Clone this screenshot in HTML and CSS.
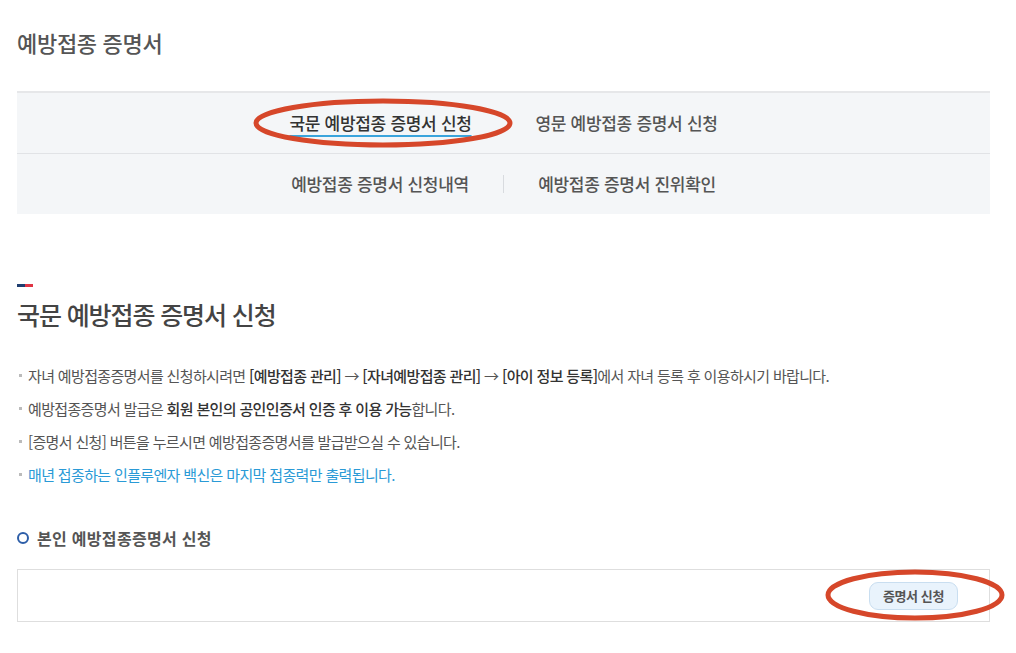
FILE: index.html
```html
<!DOCTYPE html>
<html lang="ko">
<head>
    <meta charset="UTF-8">
    <meta name="viewport" content="width=device-width, initial-scale=1.0">
    <title>예방접종 증명서</title>
    <link rel="stylesheet" href="styles.css">
</head>
<body>
    <div class="page">
        <h1 class="page-title">예방접종 증명서</h1>

        <div class="tabs">
            <div class="tab-row">
                <a class="tab active" href="#">국문 예방접종 증명서 신청</a>
                <a class="tab" href="#">영문 예방접종 증명서 신청</a>
            </div>
            <div class="tab-row">
                <a class="tab" href="#">예방접종 증명서 신청내역</a>
                <span class="tab-sep"></span>
                <a class="tab" href="#">예방접종 증명서 진위확인</a>
            </div>
            <svg class="mark mark-tab" width="262" height="52" viewBox="0 0 262 52">
                <ellipse cx="131" cy="26" rx="127" ry="22" fill="none" stroke="#d6472a" stroke-width="5"/>
            </svg>
        </div>

        <div class="section-bar"><span class="navy"></span><span class="red"></span></div>
        <h2 class="section-title">국문 예방접종 증명서 신청</h2>

        <ul class="notes">
            <li>자녀 예방접종증명서를 신청하시려면 <b>[예방접종 관리]</b> → <b>[자녀예방접종 관리]</b> → <b>[아이 정보 등록]</b>에서 자녀 등록 후 이용하시기 바랍니다.</li>
            <li>예방접종증명서 발급은 <b>회원 본인의 공인인증서 인증 후 이용 가능</b>합니다.</li>
            <li>[증명서 신청] 버튼을 누르시면 예방접종증명서를 발급받으실 수 있습니다.</li>
            <li class="blue">매년 접종하는 인플루엔자 백신은 마지막 접종력만 출력됩니다.</li>
        </ul>

        <h3 class="sub-title"><span class="ring"></span>본인 예방접종증명서 신청</h3>
        <div class="apply-box">
            <button class="btn-apply">증명서 신청</button>
            <svg class="mark mark-btn" width="182" height="54" viewBox="0 0 182 54">
                <ellipse cx="91" cy="27" rx="87" ry="23" fill="none" stroke="#d6472a" stroke-width="5"/>
            </svg>
        </div>
    </div>
</body>
</html>
```

FILE: styles.css
```css
body {
    margin: 0;
    background-color: #fff;
    font-family: "Noto Sans CJK KR", "Noto Sans", sans-serif;
    color: #555;
}

.page {
    width: 973px;
    padding: 26px 0 0 17px;
}

.page-title {
    margin: 0 0 33px;
    font-size: 22px;
    font-weight: 500;
    letter-spacing: -0.3px;
    line-height: 32px;
    color: #555;
}

.tabs {
    position: relative;
    background-color: #f4f6f8;
    border-top: 2px solid #e6e7e9;
}

.tab-row {
    display: flex;
    justify-content: center;
    align-items: center;
    height: 60px;
}

.tab-row + .tab-row {
    border-top: 1px solid #e1e3e6;
}

.tab {
    width: 186px;
    margin: 0 30px 2px;
    text-align: center;
    font-size: 17px;
    font-weight: 500;
    letter-spacing: -0.3px;
    white-space: nowrap;
    color: #555;
    text-decoration: none;
}

.tab.active {
    color: #333;
    text-decoration: underline;
    text-decoration-color: #3aa4dc;
    text-decoration-thickness: 2px;
    text-underline-offset: 5px;
}

.tab-sep {
    width: 1px;
    height: 18px;
    background-color: #d8dbdf;
}

.mark {
    position: absolute;
}

.mark-tab {
    left: 235px;
    top: 4px;
}

.section-bar {
    display: flex;
    margin-top: 70px;
}

.section-bar span {
    width: 8px;
    height: 3px;
}

.navy {
    background-color: #1f3e70;
}

.red {
    background-color: #e03444;
}

.section-title {
    margin: 9px 0 0;
    font-size: 25px;
    font-weight: 500;
    letter-spacing: -1.1px;
    line-height: 36px;
    color: #444;
}

.notes {
    list-style: none;
    margin: 27px 0 0;
    padding: 0;
}

.notes li {
    position: relative;
    padding-left: 11px;
    font-size: 15px;
    letter-spacing: -0.65px;
    line-height: 33px;
    white-space: nowrap;
    color: #555;
}

.notes li::before {
    content: "";
    position: absolute;
    left: 2px;
    top: 15px;
    width: 3px;
    height: 3px;
    background-color: #bbb;
}

.notes b {
    font-weight: 500;
    color: #333;
}

.notes li.blue {
    color: #2a9ad6;
}

.sub-title {
    display: flex;
    align-items: center;
    gap: 8px;
    margin: 36px 0 0;
    font-size: 16px;
    font-weight: 700;
    letter-spacing: 0.3px;
    line-height: 22px;
    color: #555;
}

.ring {
    width: 8px;
    height: 8px;
    border: 2px solid #2d5ea8;
    border-radius: 50%;
}

.apply-box {
    position: relative;
    display: flex;
    justify-content: flex-end;
    align-items: center;
    height: 51px;
    margin-top: 20px;
    padding-right: 31px;
    border: 1px solid #dedede;
    background-color: #fff;
}

.btn-apply {
    height: 28px;
    padding: 0 13px;
    font-family: inherit;
    font-size: 13px;
    font-weight: 700;
    letter-spacing: -0.4px;
    color: #555;
    background-color: #e9f3fc;
    border: 1px solid #c9def0;
    border-radius: 9px;
}

.mark-btn {
    left: 806px;
    top: -2px;
}
```
